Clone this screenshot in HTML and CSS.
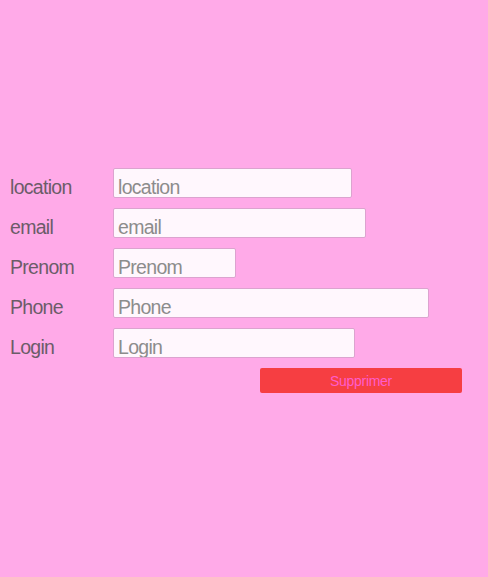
FILE: index.html
```html
<!DOCTYPE html>
<html>
<head>
<meta charset="utf-8">
<link rel="stylesheet" href="styles.css">
</head>
<body>
<form class="form">
  <div class="row"><label class="label">location</label><input class="field w-location" placeholder="location"></div>
  <div class="row"><label class="label">email</label><input class="field w-email" placeholder="email"></div>
  <div class="row"><label class="label">Prenom</label><input class="field w-prenom" placeholder="Prenom"></div>
  <div class="row"><label class="label">Phone</label><input class="field w-phone" placeholder="Phone"></div>
  <div class="row"><label class="label">Login</label><input class="field w-login" placeholder="Login"></div>
  <div class="actions"><button type="button" class="btn">Supprimer</button></div>
</form>
</body>
</html>
```

FILE: styles.css
```css
html, body {
  margin: 0;
  padding: 0;
  background: #ffaae8;
  height: 100%;
}
body {
  font-family: "Liberation Sans", Arial, sans-serif;
}
.form {
  padding: 168px 0 0 10px;
  display: flex;
  flex-direction: column;
  gap: 10px;
}
.row {
  display: flex;
  align-items: center;
  height: 30px;
}
.label {
  width: 103px;
  font-size: 19.5px;
  color: #6b5c68;
  letter-spacing: -0.7px;
  padding-top: 9px;
}
.field {
  box-sizing: border-box;
  height: 30px;
  margin: 0;
  border: 1px solid #dca3cf;
  border-radius: 2px;
  background: #fff7fd;
  font-family: "Liberation Sans", Arial, sans-serif;
  font-size: 19.5px;
  letter-spacing: -0.7px;
  padding: 8px 4px 0;
  color: #555;
  outline: none;
}
.field::placeholder {
  color: #8c8c8c;
}
.w-location { width: 239px; }
.w-email { width: 253px; }
.w-prenom { width: 123px; }
.w-phone { width: 316px; }
.w-login { width: 242px; }
.actions {
  display: flex;
  padding-left: 250px;
}
.btn {
  box-sizing: border-box;
  width: 202px;
  height: 25px;
  margin: 0;
  border: none;
  border-radius: 2px;
  background: #f63e42;
  color: #ff5ccc;
  font-family: "Liberation Sans", Arial, sans-serif;
  font-size: 14px;
  letter-spacing: -0.3px;
  padding: 0;
  cursor: pointer;
}
```
